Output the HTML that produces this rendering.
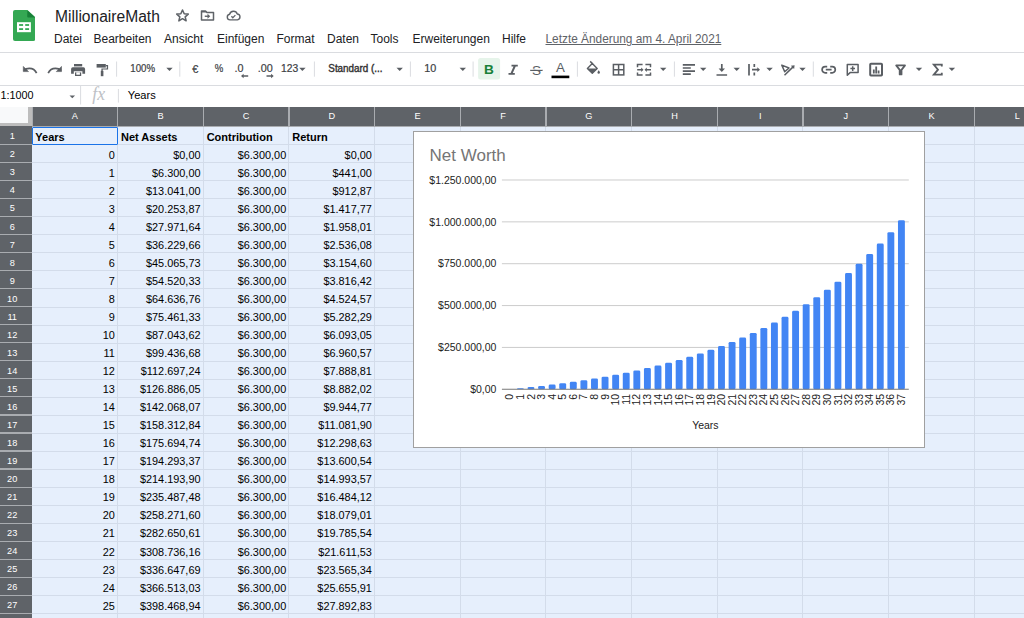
<!DOCTYPE html>
<html lang="de"><head><meta charset="utf-8"><title>MillionaireMath</title>
<style>
html,body{margin:0;padding:0}
body{width:1024px;height:618px;overflow:hidden;background:#fff;position:relative;font-family:"Liberation Sans",sans-serif;color:#202124}
.abs{position:absolute}
#title{left:55px;top:7.7px;font-size:15.6px;line-height:18px;color:#202124;white-space:nowrap}
.menu{top:32.3px;font-size:12px;line-height:14px;color:#202124;white-space:nowrap}
.hr{left:0;width:1024px;height:1px;background:#dadce0}
.tb{font-size:10.6px;color:#444;white-space:nowrap;line-height:12px}
.sep{width:1px;background:#dadce0}
#grid{left:0;top:106.5px;width:1024px;height:512px;background:#e6effc;overflow:hidden}
.ch{top:0;height:19.8px;color:#fff;font-size:9.2px;line-height:19.6px;text-align:center}
.rh{left:-4px;width:32.4px;color:#fff;font-size:9.2px;text-align:center}
.vl{top:0;width:1px;background:#d3dcea;height:512px}
.hl{left:0;height:1px;background:#d3dcea;width:1024px}
.c{font-size:10.9px;line-height:15px;white-space:nowrap;color:#000;height:15px}
.r{text-align:right}
.b{font-weight:bold;font-size:11px}
.ic{fill:none;stroke:#444;stroke-width:1.6}
</style></head><body>
<svg class="abs" style="left:12.9px;top:9.8px" width="22.4" height="30.9" viewBox="0 0 22.4 30.9">
<path d="M2 0H14.4L22.4 7.4V28.9a2 2 0 0 1-2 2H2a2 2 0 0 1-2-2V2a2 2 0 0 1 2-2z" fill="#34a853"/>
<path d="M14.4 0.3L22.2 7.4H15.2a1 1 0 0 1-1-1z" fill="#188038"/>
<rect x="4" y="12.2" width="13.9" height="10" fill="#fff"/>
<rect x="6.1" y="14.1" width="4" height="1.8" fill="#34a853"/><rect x="12.2" y="14.1" width="3.9" height="1.8" fill="#34a853"/>
<rect x="6.1" y="18.2" width="4" height="1.8" fill="#34a853"/><rect x="12.2" y="18.2" width="3.9" height="1.8" fill="#34a853"/>
</svg>
<div id="title" class="abs">MillionaireMath</div>
<!-- star -->
<svg class="abs" style="left:175px;top:8.1px" width="15" height="15" viewBox="0 0 24 24"><path d="M12 3.2l2.700 6 6.500.6-4.900 4.300 1.500 6.400L12 17.100l-5.800 3.400 1.500-6.400-4.900-4.300 6.500-.6z" fill="none" stroke="#5f6368" stroke-width="2.500" stroke-linejoin="round"/></svg>
<!-- folder move -->
<svg class="abs" style="left:200px;top:8.7px" width="15" height="13" viewBox="0 0 30 26"><path d="M3 4h8l3 3h13v15H3z" fill="none" stroke="#5f6368" stroke-width="3" stroke-linejoin="round"/><path d="M3 4h8l3 3H3z" fill="#5f6368"/><path d="M9.500 14.500h8" fill="none" stroke="#5f6368" stroke-width="2.800"/><path d="M15 9.500l5.500 5-5.500 5z" fill="#5f6368"/></svg>
<!-- cloud -->
<svg class="abs" style="left:226.200px;top:9.800px" width="15" height="11.250" viewBox="0 0 32 24"><path d="M8.500 21a6 6 0 0 1-.8-11.900A8.500 8.500 0 0 1 24 8.500 6.300 6.300 0 0 1 24.500 21z" fill="none" stroke="#5f6368" stroke-width="3" stroke-linejoin="round"/><path d="M11.500 13.500l3 3 5.500-5.500" fill="none" stroke="#5f6368" stroke-width="2.800"/></svg>

<div class="abs menu" style="left:54px">Datei</div>
<div class="abs menu" style="left:93.500px">Bearbeiten</div>
<div class="abs menu" style="left:164px">Ansicht</div>
<div class="abs menu" style="left:217px">Einfügen</div>
<div class="abs menu" style="left:276.500px">Format</div>
<div class="abs menu" style="left:327px">Daten</div>
<div class="abs menu" style="left:370.500px">Tools</div>
<div class="abs menu" style="left:412.500px">Erweiterungen</div>
<div class="abs menu" style="left:502px">Hilfe</div>
<div class="abs menu" style="left:545.500px;color:#5f6368;text-decoration:underline;font-size:11.850px">Letzte Änderung am 4. April 2021</div>
<div class="abs hr" style="top:52px"></div>
<div class="abs hr" style="top:85px"></div>
<!-- toolbar -->
<svg class="abs" style="left:0;top:53px" width="1024" height="32" viewBox="0 53 1024 32" font-family="Liberation Sans, sans-serif">
<g fill="none" stroke="#5a5e63" stroke-width="1.7" stroke-linejoin="round">
<!-- undo -->
<path d="M36.600 73.200c-1.500-3.400-4.300-4.800-7.300-4.800-2.300 0-4.200.8-5.600 2.200"/>
<path d="M23.300 66.400v5.200h5.200z" fill="#5a5e63" stroke-width="0.600"/>
<!-- redo -->
<path d="M48.200 73.200c1.500-3.400 4.300-4.800 7.300-4.800 2.300 0 4.200.8 5.600 2.200"/>
<path d="M61.500 66.400v5.200h-5.200z" fill="#5a5e63" stroke-width="0.600"/>
</g>
<!-- print -->
<g fill="#5a5e63">
<rect x="74" y="64" width="8.200" height="2.400"/>
<path d="M72.800 67.300h10.600a1.700 1.700 0 0 1 1.700 1.700v4.700h-2.700v-2.400h-8.600v2.400h-2.700v-4.700a1.700 1.700 0 0 1 1.700-1.700z"/>
<rect x="75" y="72.400" width="6.200" height="3.600"/><rect x="76.300" y="72.400" width="3.600" height="2.300" fill="#fff"/>
<!-- paint format -->
<path d="M96.600 64h9.200v3.600h-9.200z"/>
<path d="M105.800 65h2.300v4.600h-5.400v2h-1.300v-3.200h5.400v-2.200h-1z"/>
<rect x="100.800" y="70.800" width="2.600" height="5.400"/>
</g>
<g stroke="#dadce0" stroke-width="1">
<line x1="116.600" x2="116.600" y1="61.500" y2="76.700"/><line x1="179.800" x2="179.800" y1="61.500" y2="76.700"/>
<line x1="314.400" x2="314.400" y1="61.500" y2="76.700"/><line x1="410.400" x2="410.400" y1="61.500" y2="76.700"/>
<line x1="473.100" x2="473.100" y1="61.500" y2="76.700"/><line x1="577.400" x2="577.400" y1="61.500" y2="76.700"/>
<line x1="674.400" x2="674.400" y1="61.500" y2="76.700"/><line x1="813.300" x2="813.300" y1="61.500" y2="76.700"/>
</g>
<g fill="#3c4043" font-size="10.800" stroke="#3c4043" stroke-width="0.2">
<text x="130.300" y="72.300" font-size="10.2" textLength="24.8" lengthAdjust="spacingAndGlyphs" stroke="#3c4043" stroke-width="0.2">100%</text>
<text x="192.300" y="72.500" font-size="11">€</text>
<text x="214.700" y="72.400" font-size="10.6" textLength="8.500" lengthAdjust="spacingAndGlyphs">%</text>
<text x="234.600" y="72.300">.0</text>
<text x="257.800" y="72.300">.00</text>
<text x="281" y="72.300" font-size="10.3">123</text>
<text x="328.300" y="72.300" fill="#333" stroke="#333" stroke-width="0.4" font-size="10.500" textLength="54.3" lengthAdjust="spacingAndGlyphs">Standard (...</text>
<text x="424.300" y="72.300">10</text>
</g>
<g fill="#5a5e63">
<path d="M166.300 67.800h6.400l-3.200 3.200z"/>
<path d="M299.200 67.800h6.400l-3.200 3.200z"/>
<path d="M396.500 67.800h6.400l-3.200 3.200z"/>
<path d="M459.600 67.800h6.400l-3.200 3.200z"/>
<path d="M660 67.800h6.400l-3.200 3.200z"/>
<path d="M700 67.800h6.400l-3.200 3.200z"/>
<path d="M733.500 67.800h6.400l-3.200 3.200z"/>
<path d="M766.400 67.800h6.400l-3.200 3.200z"/>
<path d="M799.300 67.800h6.400l-3.200 3.200z"/>
<path d="M915.800 67.800h6.400l-3.200 3.200z"/>
<path d="M948.700 67.800h6.400l-3.200 3.200z"/>
<!-- small arrows below .0 and .00 -->
<path d="M241 76l2.600-2.200v1.500h4.600v1.400h-4.600v1.500z"/>
<path d="M273.700 76l-2.600-2.200v1.500h-4.600v1.400h4.600v1.500z"/>
</g>
<!-- bold active -->
<rect x="478.100" y="58.100" width="22" height="21.400" rx="2.500" fill="#e6f4ea"/>
<text x="484.100" y="74.200" font-size="13.6" font-weight="bold" fill="#188038">B</text>
<!-- italic -->
<path d="M511.500 64.800h6.300v1.700h-2.100l-2.900 6.600h2v1.700h-6.300v-1.700h2.100l2.900-6.600h-2z" fill="#5a5e63"/>
<!-- strikethrough -->
<text x="531.900" y="75" font-size="13.6" fill="#5a5e63">S</text>
<rect x="530.200" y="69.600" width="12.400" height="1.400" fill="#5a5e63"/>
<rect x="530.200" y="68.700" width="12.400" height="0.900" fill="#fff"/>
<!-- text color -->
<text x="555.900" y="72.400" font-size="13.300" fill="#5a5e63">A</text>
<rect x="551.500" y="75.600" width="17.800" height="2.600" fill="#000"/>
<!-- fill color -->
<g fill="#5a5e63">
<path d="M592.300 63.500l4.900 4.900-4.900 4.900-4.900-4.900z" fill="none" stroke="#5a5e63" stroke-width="1.400" stroke-linejoin="round"/>
<path d="M587.400 68.400h9.800l-4.900 4.900z"/>
<path d="M592.800 64l-2.600-2.600" stroke="#5a5e63" stroke-width="1.500"/>
<path d="M598.700 70.300s-1.200 1.500-1.200 2.300a1.200 1.200 0 0 0 2.400 0c0-.8-1.200-2.300-1.200-2.300z"/>
</g>
<!-- borders -->
<g fill="none" stroke="#5a5e63" stroke-width="1.500">
<rect x="613.400" y="64.500" width="10.400" height="10.400"/><path d="M618.600 64.500v10.400M613.400 69.700h10.400"/>
</g>
<!-- merge -->
<g fill="none" stroke="#5a5e63" stroke-width="1.500">
<path d="M642.600 64.600h-5.100v2.600M645.400 64.600h5.100v2.600M642.600 75h-5.100v-2.600M645.400 75h5.100v-2.600"/>
<path d="M637.200 69.800h5M651 69.800h-5"/>
</g>
<path d="M641.200 67.600l2.300 2.200-2.300 2.200zM646.800 67.600l-2.300 2.200 2.300 2.200z" fill="#5a5e63"/>
<!-- align left -->
<g stroke="#5a5e63" stroke-width="1.700">
<path d="M682.800 64.900h12.200M682.800 68h8M682.800 71.100h12.200M682.800 74.200h8"/>
</g>
<!-- valign bottom -->
<g stroke="#5a5e63" stroke-width="1.700" fill="none">
<path d="M716.500 75h10.600M721.800 64v7"/>
</g>
<path d="M718.600 68.600h6.400l-3.200 3.400z" fill="#5a5e63"/>
<!-- wrap overflow -->
<g stroke="#5a5e63" stroke-width="1.700" fill="none">
<path d="M749 64v11.400M754.300 64v3M754.300 72.400v3M752 69.700h6"/>
</g>
<path d="M757.300 67.300l2.700 2.400-2.700 2.400z" fill="#5a5e63"/>
<!-- rotate -->
<g stroke="#5a5e63" stroke-width="1.500" fill="none" stroke-linejoin="round">
<path d="M781.800 65.100l7.200 2.900-4.300 3.800z"/>
<path d="M784.500 75.300l8.600-8.400"/>
</g>
<path d="M794.600 65.300l-3.800.5 3.300 3.300z" fill="#5a5e63"/>
<!-- link -->
<g stroke="#5a5e63" stroke-width="1.700" fill="none">
<path d="M827.200 66.600h-2a3.100 3.100 0 0 0 0 6.200h2M830.200 66.600h2a3.100 3.100 0 0 1 0 6.200h-2M825.800 69.700h5.800"/>
</g>
<!-- comment -->
<g stroke="#5a5e63" stroke-width="1.500" fill="none" stroke-linejoin="round">
<path d="M847.300 64.600h10.800v8h-8l-2.800 2.600z"/><path d="M852.700 66.300v4.600M850.400 68.600h4.600"/>
</g>
<!-- chart -->
<rect x="870.200" y="63.800" width="11.800" height="11.800" rx="0.800" fill="none" stroke="#5a5e63" stroke-width="2"/>
<path d="M872.900 69.400h1.800v4.200h-1.800zM875.300 66.600h1.800v7h-1.800zM877.700 70.600h1.800v3h-1.800z" fill="#5a5e63"/>
<!-- filter -->
<path d="M896.200 65.400h8.800l-3.500 4.500v4.500h-1.800v-4.500z" fill="none" stroke="#5a5e63" stroke-width="1.800" stroke-linejoin="round"/>
<!-- sigma -->
<path d="M941.800 66.600v-1.900h-8l4.200 5-4.200 5h8v-1.900" fill="none" stroke="#5a5e63" stroke-width="1.800"/>
</svg>
<!-- formula bar -->
<div class="abs" style="left:0.500px;top:88.600px;font-size:10.800px;line-height:12px;color:#000">1:1000</div>
<svg class="abs" style="left:60px;top:86px" width="70" height="20" viewBox="60 86 70 20">
<path d="M69.500 95.400h5.600l-2.800 2.900z" fill="#5f6368"/>
<line x1="80.600" x2="80.600" y1="86" y2="104.500" stroke="#dadce0"/>
<line x1="118.400" x2="118.400" y1="89" y2="102.600" stroke="#dadce0"/>
<text x="92.200" y="100.300" font-family="Liberation Serif, serif" font-style="italic" font-size="17.800" fill="#bdc1c6">fx</text>
</svg>
<div class="abs" style="left:127.800px;top:88.600px;font-size:11.100px;line-height:12px;color:#000">Years</div>
<div id="grid" class="abs">
<div class="abs vl" style="left:117.12px"></div><div class="abs vl" style="left:202.79px"></div><div class="abs vl" style="left:288.46px"></div><div class="abs vl" style="left:374.13px"></div><div class="abs vl" style="left:459.8px"></div><div class="abs vl" style="left:545.47px"></div><div class="abs vl" style="left:631.14px"></div><div class="abs vl" style="left:716.81px"></div><div class="abs vl" style="left:802.48px"></div><div class="abs vl" style="left:888.15px"></div><div class="abs vl" style="left:973.82px"></div><div class="abs hl" style="top:37.64px"></div><div class="abs hl" style="top:55.68px"></div><div class="abs hl" style="top:73.72px"></div><div class="abs hl" style="top:91.76px"></div><div class="abs hl" style="top:109.8px"></div><div class="abs hl" style="top:127.84px"></div><div class="abs hl" style="top:145.88px"></div><div class="abs hl" style="top:163.92px"></div><div class="abs hl" style="top:181.96px"></div><div class="abs hl" style="top:200px"></div><div class="abs hl" style="top:218.04px"></div><div class="abs hl" style="top:236.08px"></div><div class="abs hl" style="top:254.12px"></div><div class="abs hl" style="top:272.16px"></div><div class="abs hl" style="top:290.2px"></div><div class="abs hl" style="top:308.24px"></div><div class="abs hl" style="top:326.28px"></div><div class="abs hl" style="top:344.32px"></div><div class="abs hl" style="top:362.36px"></div><div class="abs hl" style="top:380.4px"></div><div class="abs hl" style="top:398.44px"></div><div class="abs hl" style="top:416.48px"></div><div class="abs hl" style="top:434.52px"></div><div class="abs hl" style="top:452.56px"></div><div class="abs hl" style="top:470.6px"></div><div class="abs hl" style="top:488.64px"></div><div class="abs hl" style="top:506.68px"></div><div class="abs hl" style="top:524.72px"></div>
<div class="abs" style="left:0;top:0;width:1024px;height:20.5px;background:#a9acb0"></div><div class="abs" style="left:0;top:0;width:1024px;height:19.4px;background:#5f6368"></div><div class="abs ch" style="left:32px;width:85.67px">A</div><div class="abs ch" style="left:117.67px;width:85.67px">B</div><div class="abs ch" style="left:203.34px;width:85.67px">C</div><div class="abs ch" style="left:289.01px;width:85.67px">D</div><div class="abs ch" style="left:374.68px;width:85.67px">E</div><div class="abs ch" style="left:460.35px;width:85.67px">F</div><div class="abs ch" style="left:546.02px;width:85.67px">G</div><div class="abs ch" style="left:631.69px;width:85.67px">H</div><div class="abs ch" style="left:717.36px;width:85.67px">I</div><div class="abs ch" style="left:803.03px;width:85.67px">J</div><div class="abs ch" style="left:888.7px;width:85.67px">K</div><div class="abs ch" style="left:974.37px;width:85.67px">L</div><div class="abs" style="left:31.45px;top:0;width:1.2px;height:19.8px;background:#a9acb0"></div><div class="abs" style="left:117.12px;top:0;width:1.2px;height:19.8px;background:#a9acb0"></div><div class="abs" style="left:202.79px;top:0;width:1.2px;height:19.8px;background:#a9acb0"></div><div class="abs" style="left:288.46px;top:0;width:1.2px;height:19.8px;background:#a9acb0"></div><div class="abs" style="left:374.13px;top:0;width:1.2px;height:19.8px;background:#a9acb0"></div><div class="abs" style="left:459.8px;top:0;width:1.2px;height:19.8px;background:#a9acb0"></div><div class="abs" style="left:545.47px;top:0;width:1.2px;height:19.8px;background:#a9acb0"></div><div class="abs" style="left:631.14px;top:0;width:1.2px;height:19.8px;background:#a9acb0"></div><div class="abs" style="left:716.81px;top:0;width:1.2px;height:19.8px;background:#a9acb0"></div><div class="abs" style="left:802.48px;top:0;width:1.2px;height:19.8px;background:#a9acb0"></div><div class="abs" style="left:888.15px;top:0;width:1.2px;height:19.8px;background:#a9acb0"></div><div class="abs" style="left:973.82px;top:0;width:1.2px;height:19.8px;background:#a9acb0"></div><div class="abs" style="left:0;top:0;width:32px;height:19.8px;background:#bdbdbd"></div><div class="abs" style="left:0;top:0;width:28px;height:16.2px;background:#f8f9fa"></div><div class="abs" style="left:0;top:19.8px;width:32px;height:500px;background:#5f6368"></div><div class="abs rh" style="top:19.8px;height:18.04px;line-height:20.04px">1</div><div class="abs" style="left:0;top:37.24px;width:32px;height:1.2px;background:#a9acb0"></div><div class="abs rh" style="top:37.84px;height:18.04px;line-height:20.04px">2</div><div class="abs" style="left:0;top:55.28px;width:32px;height:1.2px;background:#a9acb0"></div><div class="abs rh" style="top:55.88px;height:18.04px;line-height:20.04px">3</div><div class="abs" style="left:0;top:73.32px;width:32px;height:1.2px;background:#a9acb0"></div><div class="abs rh" style="top:73.92px;height:18.04px;line-height:20.04px">4</div><div class="abs" style="left:0;top:91.36px;width:32px;height:1.2px;background:#a9acb0"></div><div class="abs rh" style="top:91.96px;height:18.04px;line-height:20.04px">5</div><div class="abs" style="left:0;top:109.4px;width:32px;height:1.2px;background:#a9acb0"></div><div class="abs rh" style="top:110px;height:18.04px;line-height:20.04px">6</div><div class="abs" style="left:0;top:127.44px;width:32px;height:1.2px;background:#a9acb0"></div><div class="abs rh" style="top:128.04px;height:18.04px;line-height:20.04px">7</div><div class="abs" style="left:0;top:145.48px;width:32px;height:1.2px;background:#a9acb0"></div><div class="abs rh" style="top:146.08px;height:18.04px;line-height:20.04px">8</div><div class="abs" style="left:0;top:163.52px;width:32px;height:1.2px;background:#a9acb0"></div><div class="abs rh" style="top:164.12px;height:18.04px;line-height:20.04px">9</div><div class="abs" style="left:0;top:181.56px;width:32px;height:1.2px;background:#a9acb0"></div><div class="abs rh" style="top:182.16px;height:18.04px;line-height:20.04px">10</div><div class="abs" style="left:0;top:199.6px;width:32px;height:1.2px;background:#a9acb0"></div><div class="abs rh" style="top:200.2px;height:18.04px;line-height:20.04px">11</div><div class="abs" style="left:0;top:217.64px;width:32px;height:1.2px;background:#a9acb0"></div><div class="abs rh" style="top:218.24px;height:18.04px;line-height:20.04px">12</div><div class="abs" style="left:0;top:235.68px;width:32px;height:1.2px;background:#a9acb0"></div><div class="abs rh" style="top:236.28px;height:18.04px;line-height:20.04px">13</div><div class="abs" style="left:0;top:253.72px;width:32px;height:1.2px;background:#a9acb0"></div><div class="abs rh" style="top:254.32px;height:18.04px;line-height:20.04px">14</div><div class="abs" style="left:0;top:271.76px;width:32px;height:1.2px;background:#a9acb0"></div><div class="abs rh" style="top:272.36px;height:18.04px;line-height:20.04px">15</div><div class="abs" style="left:0;top:289.8px;width:32px;height:1.2px;background:#a9acb0"></div><div class="abs rh" style="top:290.4px;height:18.04px;line-height:20.04px">16</div><div class="abs" style="left:0;top:307.84px;width:32px;height:1.2px;background:#a9acb0"></div><div class="abs rh" style="top:308.44px;height:18.04px;line-height:20.04px">17</div><div class="abs" style="left:0;top:325.88px;width:32px;height:1.2px;background:#a9acb0"></div><div class="abs rh" style="top:326.48px;height:18.04px;line-height:20.04px">18</div><div class="abs" style="left:0;top:343.92px;width:32px;height:1.2px;background:#a9acb0"></div><div class="abs rh" style="top:344.52px;height:18.04px;line-height:20.04px">19</div><div class="abs" style="left:0;top:361.96px;width:32px;height:1.2px;background:#a9acb0"></div><div class="abs rh" style="top:362.56px;height:18.04px;line-height:20.04px">20</div><div class="abs" style="left:0;top:380px;width:32px;height:1.2px;background:#a9acb0"></div><div class="abs rh" style="top:380.6px;height:18.04px;line-height:20.04px">21</div><div class="abs" style="left:0;top:398.04px;width:32px;height:1.2px;background:#a9acb0"></div><div class="abs rh" style="top:398.64px;height:18.04px;line-height:20.04px">22</div><div class="abs" style="left:0;top:416.08px;width:32px;height:1.2px;background:#a9acb0"></div><div class="abs rh" style="top:416.68px;height:18.04px;line-height:20.04px">23</div><div class="abs" style="left:0;top:434.12px;width:32px;height:1.2px;background:#a9acb0"></div><div class="abs rh" style="top:434.72px;height:18.04px;line-height:20.04px">24</div><div class="abs" style="left:0;top:452.16px;width:32px;height:1.2px;background:#a9acb0"></div><div class="abs rh" style="top:452.76px;height:18.04px;line-height:20.04px">25</div><div class="abs" style="left:0;top:470.2px;width:32px;height:1.2px;background:#a9acb0"></div><div class="abs rh" style="top:470.8px;height:18.04px;line-height:20.04px">26</div><div class="abs" style="left:0;top:488.24px;width:32px;height:1.2px;background:#a9acb0"></div><div class="abs rh" style="top:488.84px;height:18.04px;line-height:20.04px">27</div><div class="abs" style="left:0;top:506.28px;width:32px;height:1.2px;background:#a9acb0"></div><div class="abs rh" style="top:506.88px;height:18.04px;line-height:20.04px">28</div><div class="abs" style="left:0;top:524.32px;width:32px;height:1.2px;background:#a9acb0"></div>
<div class="abs c b" style="left:35.3px;top:23.1px">Years</div><div class="abs c b" style="left:120.97px;top:23.1px">Net Assets</div><div class="abs c b" style="left:206.64px;top:23.1px">Contribution</div><div class="abs c b" style="left:292.31px;top:23.1px">Return</div><div class="abs c r" style="left:32px;width:82.87px;top:41.14px">0</div><div class="abs c r" style="left:117.67px;width:82.87px;top:41.14px">$0,00</div><div class="abs c r" style="left:203.34px;width:82.87px;top:41.14px">$6.300,00</div><div class="abs c r" style="left:289.01px;width:82.87px;top:41.14px">$0,00</div>
<div class="abs c r" style="left:32px;width:82.87px;top:59.18px">1</div><div class="abs c r" style="left:117.67px;width:82.87px;top:59.18px">$6.300,00</div><div class="abs c r" style="left:203.34px;width:82.87px;top:59.18px">$6.300,00</div><div class="abs c r" style="left:289.01px;width:82.87px;top:59.18px">$441,00</div>
<div class="abs c r" style="left:32px;width:82.87px;top:77.22px">2</div><div class="abs c r" style="left:117.67px;width:82.87px;top:77.22px">$13.041,00</div><div class="abs c r" style="left:203.34px;width:82.87px;top:77.22px">$6.300,00</div><div class="abs c r" style="left:289.01px;width:82.87px;top:77.22px">$912,87</div>
<div class="abs c r" style="left:32px;width:82.87px;top:95.26px">3</div><div class="abs c r" style="left:117.67px;width:82.87px;top:95.26px">$20.253,87</div><div class="abs c r" style="left:203.34px;width:82.87px;top:95.26px">$6.300,00</div><div class="abs c r" style="left:289.01px;width:82.87px;top:95.26px">$1.417,77</div>
<div class="abs c r" style="left:32px;width:82.87px;top:113.3px">4</div><div class="abs c r" style="left:117.67px;width:82.87px;top:113.3px">$27.971,64</div><div class="abs c r" style="left:203.34px;width:82.87px;top:113.3px">$6.300,00</div><div class="abs c r" style="left:289.01px;width:82.87px;top:113.3px">$1.958,01</div>
<div class="abs c r" style="left:32px;width:82.87px;top:131.34px">5</div><div class="abs c r" style="left:117.67px;width:82.87px;top:131.34px">$36.229,66</div><div class="abs c r" style="left:203.34px;width:82.87px;top:131.34px">$6.300,00</div><div class="abs c r" style="left:289.01px;width:82.87px;top:131.34px">$2.536,08</div>
<div class="abs c r" style="left:32px;width:82.87px;top:149.38px">6</div><div class="abs c r" style="left:117.67px;width:82.87px;top:149.38px">$45.065,73</div><div class="abs c r" style="left:203.34px;width:82.87px;top:149.38px">$6.300,00</div><div class="abs c r" style="left:289.01px;width:82.87px;top:149.38px">$3.154,60</div>
<div class="abs c r" style="left:32px;width:82.87px;top:167.42px">7</div><div class="abs c r" style="left:117.67px;width:82.87px;top:167.42px">$54.520,33</div><div class="abs c r" style="left:203.34px;width:82.87px;top:167.42px">$6.300,00</div><div class="abs c r" style="left:289.01px;width:82.87px;top:167.42px">$3.816,42</div>
<div class="abs c r" style="left:32px;width:82.87px;top:185.46px">8</div><div class="abs c r" style="left:117.67px;width:82.87px;top:185.46px">$64.636,76</div><div class="abs c r" style="left:203.34px;width:82.87px;top:185.46px">$6.300,00</div><div class="abs c r" style="left:289.01px;width:82.87px;top:185.46px">$4.524,57</div>
<div class="abs c r" style="left:32px;width:82.87px;top:203.5px">9</div><div class="abs c r" style="left:117.67px;width:82.87px;top:203.5px">$75.461,33</div><div class="abs c r" style="left:203.34px;width:82.87px;top:203.5px">$6.300,00</div><div class="abs c r" style="left:289.01px;width:82.87px;top:203.5px">$5.282,29</div>
<div class="abs c r" style="left:32px;width:82.87px;top:221.54px">10</div><div class="abs c r" style="left:117.67px;width:82.87px;top:221.54px">$87.043,62</div><div class="abs c r" style="left:203.34px;width:82.87px;top:221.54px">$6.300,00</div><div class="abs c r" style="left:289.01px;width:82.87px;top:221.54px">$6.093,05</div>
<div class="abs c r" style="left:32px;width:82.87px;top:239.58px">11</div><div class="abs c r" style="left:117.67px;width:82.87px;top:239.58px">$99.436,68</div><div class="abs c r" style="left:203.34px;width:82.87px;top:239.58px">$6.300,00</div><div class="abs c r" style="left:289.01px;width:82.87px;top:239.58px">$6.960,57</div>
<div class="abs c r" style="left:32px;width:82.87px;top:257.62px">12</div><div class="abs c r" style="left:117.67px;width:82.87px;top:257.62px">$112.697,24</div><div class="abs c r" style="left:203.34px;width:82.87px;top:257.62px">$6.300,00</div><div class="abs c r" style="left:289.01px;width:82.87px;top:257.62px">$7.888,81</div>
<div class="abs c r" style="left:32px;width:82.87px;top:275.66px">13</div><div class="abs c r" style="left:117.67px;width:82.87px;top:275.66px">$126.886,05</div><div class="abs c r" style="left:203.34px;width:82.87px;top:275.66px">$6.300,00</div><div class="abs c r" style="left:289.01px;width:82.87px;top:275.66px">$8.882,02</div>
<div class="abs c r" style="left:32px;width:82.87px;top:293.7px">14</div><div class="abs c r" style="left:117.67px;width:82.87px;top:293.7px">$142.068,07</div><div class="abs c r" style="left:203.34px;width:82.87px;top:293.7px">$6.300,00</div><div class="abs c r" style="left:289.01px;width:82.87px;top:293.7px">$9.944,77</div>
<div class="abs c r" style="left:32px;width:82.87px;top:311.74px">15</div><div class="abs c r" style="left:117.67px;width:82.87px;top:311.74px">$158.312,84</div><div class="abs c r" style="left:203.34px;width:82.87px;top:311.74px">$6.300,00</div><div class="abs c r" style="left:289.01px;width:82.87px;top:311.74px">$11.081,90</div>
<div class="abs c r" style="left:32px;width:82.87px;top:329.78px">16</div><div class="abs c r" style="left:117.67px;width:82.87px;top:329.78px">$175.694,74</div><div class="abs c r" style="left:203.34px;width:82.87px;top:329.78px">$6.300,00</div><div class="abs c r" style="left:289.01px;width:82.87px;top:329.78px">$12.298,63</div>
<div class="abs c r" style="left:32px;width:82.87px;top:347.82px">17</div><div class="abs c r" style="left:117.67px;width:82.87px;top:347.82px">$194.293,37</div><div class="abs c r" style="left:203.34px;width:82.87px;top:347.82px">$6.300,00</div><div class="abs c r" style="left:289.01px;width:82.87px;top:347.82px">$13.600,54</div>
<div class="abs c r" style="left:32px;width:82.87px;top:365.86px">18</div><div class="abs c r" style="left:117.67px;width:82.87px;top:365.86px">$214.193,90</div><div class="abs c r" style="left:203.34px;width:82.87px;top:365.86px">$6.300,00</div><div class="abs c r" style="left:289.01px;width:82.87px;top:365.86px">$14.993,57</div>
<div class="abs c r" style="left:32px;width:82.87px;top:383.9px">19</div><div class="abs c r" style="left:117.67px;width:82.87px;top:383.9px">$235.487,48</div><div class="abs c r" style="left:203.34px;width:82.87px;top:383.9px">$6.300,00</div><div class="abs c r" style="left:289.01px;width:82.87px;top:383.9px">$16.484,12</div>
<div class="abs c r" style="left:32px;width:82.87px;top:401.94px">20</div><div class="abs c r" style="left:117.67px;width:82.87px;top:401.94px">$258.271,60</div><div class="abs c r" style="left:203.34px;width:82.87px;top:401.94px">$6.300,00</div><div class="abs c r" style="left:289.01px;width:82.87px;top:401.94px">$18.079,01</div>
<div class="abs c r" style="left:32px;width:82.87px;top:419.98px">21</div><div class="abs c r" style="left:117.67px;width:82.87px;top:419.98px">$282.650,61</div><div class="abs c r" style="left:203.34px;width:82.87px;top:419.98px">$6.300,00</div><div class="abs c r" style="left:289.01px;width:82.87px;top:419.98px">$19.785,54</div>
<div class="abs c r" style="left:32px;width:82.87px;top:438.02px">22</div><div class="abs c r" style="left:117.67px;width:82.87px;top:438.02px">$308.736,16</div><div class="abs c r" style="left:203.34px;width:82.87px;top:438.02px">$6.300,00</div><div class="abs c r" style="left:289.01px;width:82.87px;top:438.02px">$21.611,53</div>
<div class="abs c r" style="left:32px;width:82.87px;top:456.06px">23</div><div class="abs c r" style="left:117.67px;width:82.87px;top:456.06px">$336.647,69</div><div class="abs c r" style="left:203.34px;width:82.87px;top:456.06px">$6.300,00</div><div class="abs c r" style="left:289.01px;width:82.87px;top:456.06px">$23.565,34</div>
<div class="abs c r" style="left:32px;width:82.87px;top:474.1px">24</div><div class="abs c r" style="left:117.67px;width:82.87px;top:474.1px">$366.513,03</div><div class="abs c r" style="left:203.34px;width:82.87px;top:474.1px">$6.300,00</div><div class="abs c r" style="left:289.01px;width:82.87px;top:474.1px">$25.655,91</div>
<div class="abs c r" style="left:32px;width:82.87px;top:492.14px">25</div><div class="abs c r" style="left:117.67px;width:82.87px;top:492.14px">$398.468,94</div><div class="abs c r" style="left:203.34px;width:82.87px;top:492.14px">$6.300,00</div><div class="abs c r" style="left:289.01px;width:82.87px;top:492.14px">$27.892,83</div>
<div class="abs c r" style="left:32px;width:82.87px;top:510.18px">26</div><div class="abs c r" style="left:117.67px;width:82.87px;top:510.18px">$432.661,76</div><div class="abs c r" style="left:203.34px;width:82.87px;top:510.18px">$6.300,00</div><div class="abs c r" style="left:289.01px;width:82.87px;top:510.18px">$30.286,32</div>
<div class="abs" style="left:32.1px;top:20.4px;width:83.47px;height:15.84px;border:1.4px solid #1a73e8;border-radius:1px"></div></div>
<div class="abs" style="left:413.4px;top:131.1px;width:509.2px;height:315.1px;background:#fff;border:1px solid #a0a0a0"></div>
<svg class="abs" style="left:413.4px;top:131.1px" width="511.2" height="317.1" viewBox="413.4 131.1 511.2 317.1" font-family="Liberation Sans, sans-serif">
<text x="430" y="160.8" font-size="17" fill="#757575">Net Worth</text>
<line x1="502.3" x2="909.2" y1="180.1" y2="180.1" stroke="#cccccc" stroke-width="1"/><text x="496.8" y="183.8" font-size="10.5" fill="#222" text-anchor="end">$1.250.000,00</text>
<line x1="502.3" x2="909.2" y1="221.96" y2="221.96" stroke="#cccccc" stroke-width="1"/><text x="496.8" y="225.66" font-size="10.5" fill="#222" text-anchor="end">$1.000.000,00</text>
<line x1="502.3" x2="909.2" y1="263.82" y2="263.82" stroke="#cccccc" stroke-width="1"/><text x="496.8" y="267.52" font-size="10.5" fill="#222" text-anchor="end">$750.000,00</text>
<line x1="502.3" x2="909.2" y1="305.68" y2="305.68" stroke="#cccccc" stroke-width="1"/><text x="496.8" y="309.38" font-size="10.5" fill="#222" text-anchor="end">$500.000,00</text>
<line x1="502.3" x2="909.2" y1="347.54" y2="347.54" stroke="#cccccc" stroke-width="1"/><text x="496.8" y="351.24" font-size="10.5" fill="#222" text-anchor="end">$250.000,00</text>
<text x="496.8" y="393.1" font-size="10.5" fill="#222" text-anchor="end">$0,00</text>
<rect x="517.33" y="388.35" width="6.9" height="1.05" rx="1.4" fill="#4285f4"/><rect x="527.92" y="387.22" width="6.9" height="2.18" rx="1.4" fill="#4285f4"/><rect x="538.5" y="386.01" width="6.9" height="3.39" rx="1.4" fill="#4285f4"/><rect x="549.09" y="384.72" width="6.9" height="4.68" rx="1.4" fill="#4285f4"/><rect x="559.67" y="383.33" width="6.9" height="6.07" rx="1.4" fill="#4285f4"/><rect x="570.26" y="381.85" width="6.9" height="7.55" rx="1.4" fill="#4285f4"/><rect x="580.84" y="380.27" width="6.9" height="9.13" rx="1.4" fill="#4285f4"/><rect x="591.43" y="378.58" width="6.9" height="10.82" rx="1.4" fill="#4285f4"/><rect x="602.01" y="376.76" width="6.9" height="12.64" rx="1.4" fill="#4285f4"/><rect x="612.6" y="374.83" width="6.9" height="14.57" rx="1.4" fill="#4285f4"/><rect x="623.18" y="372.75" width="6.9" height="16.65" rx="1.4" fill="#4285f4"/><rect x="633.77" y="370.53" width="6.9" height="18.87" rx="1.4" fill="#4285f4"/><rect x="644.36" y="368.15" width="6.9" height="21.25" rx="1.4" fill="#4285f4"/><rect x="654.94" y="365.61" width="6.9" height="23.79" rx="1.4" fill="#4285f4"/><rect x="665.52" y="362.89" width="6.9" height="26.51" rx="1.4" fill="#4285f4"/><rect x="676.11" y="359.98" width="6.9" height="29.42" rx="1.4" fill="#4285f4"/><rect x="686.69" y="356.87" width="6.9" height="32.53" rx="1.4" fill="#4285f4"/><rect x="697.28" y="353.54" width="6.9" height="35.86" rx="1.4" fill="#4285f4"/><rect x="707.87" y="349.97" width="6.9" height="39.43" rx="1.4" fill="#4285f4"/><rect x="718.45" y="346.16" width="6.9" height="43.24" rx="1.4" fill="#4285f4"/><rect x="729.03" y="342.07" width="6.9" height="47.33" rx="1.4" fill="#4285f4"/><rect x="739.62" y="337.71" width="6.9" height="51.69" rx="1.4" fill="#4285f4"/><rect x="750.2" y="333.03" width="6.9" height="56.37" rx="1.4" fill="#4285f4"/><rect x="760.79" y="328.03" width="6.9" height="61.37" rx="1.4" fill="#4285f4"/><rect x="771.38" y="322.68" width="6.9" height="66.72" rx="1.4" fill="#4285f4"/><rect x="781.96" y="316.96" width="6.9" height="72.44" rx="1.4" fill="#4285f4"/><rect x="792.54" y="310.83" width="6.9" height="78.57" rx="1.4" fill="#4285f4"/><rect x="803.13" y="304.27" width="6.9" height="85.13" rx="1.4" fill="#4285f4"/><rect x="813.71" y="297.26" width="6.9" height="92.14" rx="1.4" fill="#4285f4"/><rect x="824.3" y="289.76" width="6.9" height="99.64" rx="1.4" fill="#4285f4"/><rect x="834.88" y="281.73" width="6.9" height="107.67" rx="1.4" fill="#4285f4"/><rect x="845.47" y="273.13" width="6.9" height="116.27" rx="1.4" fill="#4285f4"/><rect x="856.05" y="263.94" width="6.9" height="125.46" rx="1.4" fill="#4285f4"/><rect x="866.64" y="254.1" width="6.9" height="135.3" rx="1.4" fill="#4285f4"/><rect x="877.22" y="243.58" width="6.9" height="145.82" rx="1.4" fill="#4285f4"/><rect x="887.81" y="232.32" width="6.9" height="157.08" rx="1.4" fill="#4285f4"/><rect x="898.39" y="220.26" width="6.9" height="169.14" rx="1.4" fill="#4285f4"/>
<line x1="502.3" x2="909.2" y1="389.4" y2="389.4" stroke="#777" stroke-width="1.1"/>
<text transform="translate(513.8 394) rotate(-90)" font-size="10.5" fill="#222" text-anchor="end">0</text><text transform="translate(524.38 394) rotate(-90)" font-size="10.5" fill="#222" text-anchor="end">1</text><text transform="translate(534.97 394) rotate(-90)" font-size="10.5" fill="#222" text-anchor="end">2</text><text transform="translate(545.56 394) rotate(-90)" font-size="10.5" fill="#222" text-anchor="end">3</text><text transform="translate(556.14 394) rotate(-90)" font-size="10.5" fill="#222" text-anchor="end">4</text><text transform="translate(566.73 394) rotate(-90)" font-size="10.5" fill="#222" text-anchor="end">5</text><text transform="translate(577.31 394) rotate(-90)" font-size="10.5" fill="#222" text-anchor="end">6</text><text transform="translate(587.89 394) rotate(-90)" font-size="10.5" fill="#222" text-anchor="end">7</text><text transform="translate(598.48 394) rotate(-90)" font-size="10.5" fill="#222" text-anchor="end">8</text><text transform="translate(609.07 394) rotate(-90)" font-size="10.5" fill="#222" text-anchor="end">9</text><text transform="translate(619.65 394) rotate(-90)" font-size="10.5" fill="#222" text-anchor="end">10</text><text transform="translate(630.24 394) rotate(-90)" font-size="10.5" fill="#222" text-anchor="end">11</text><text transform="translate(640.82 394) rotate(-90)" font-size="10.5" fill="#222" text-anchor="end">12</text><text transform="translate(651.41 394) rotate(-90)" font-size="10.5" fill="#222" text-anchor="end">13</text><text transform="translate(661.99 394) rotate(-90)" font-size="10.5" fill="#222" text-anchor="end">14</text><text transform="translate(672.58 394) rotate(-90)" font-size="10.5" fill="#222" text-anchor="end">15</text><text transform="translate(683.16 394) rotate(-90)" font-size="10.5" fill="#222" text-anchor="end">16</text><text transform="translate(693.75 394) rotate(-90)" font-size="10.5" fill="#222" text-anchor="end">17</text><text transform="translate(704.33 394) rotate(-90)" font-size="10.5" fill="#222" text-anchor="end">18</text><text transform="translate(714.92 394) rotate(-90)" font-size="10.5" fill="#222" text-anchor="end">19</text><text transform="translate(725.5 394) rotate(-90)" font-size="10.5" fill="#222" text-anchor="end">20</text><text transform="translate(736.09 394) rotate(-90)" font-size="10.5" fill="#222" text-anchor="end">21</text><text transform="translate(746.67 394) rotate(-90)" font-size="10.5" fill="#222" text-anchor="end">22</text><text transform="translate(757.25 394) rotate(-90)" font-size="10.5" fill="#222" text-anchor="end">23</text><text transform="translate(767.84 394) rotate(-90)" font-size="10.5" fill="#222" text-anchor="end">24</text><text transform="translate(778.43 394) rotate(-90)" font-size="10.5" fill="#222" text-anchor="end">25</text><text transform="translate(789.01 394) rotate(-90)" font-size="10.5" fill="#222" text-anchor="end">26</text><text transform="translate(799.6 394) rotate(-90)" font-size="10.5" fill="#222" text-anchor="end">27</text><text transform="translate(810.18 394) rotate(-90)" font-size="10.5" fill="#222" text-anchor="end">28</text><text transform="translate(820.76 394) rotate(-90)" font-size="10.5" fill="#222" text-anchor="end">29</text><text transform="translate(831.35 394) rotate(-90)" font-size="10.5" fill="#222" text-anchor="end">30</text><text transform="translate(841.94 394) rotate(-90)" font-size="10.5" fill="#222" text-anchor="end">31</text><text transform="translate(852.52 394) rotate(-90)" font-size="10.5" fill="#222" text-anchor="end">32</text><text transform="translate(863.11 394) rotate(-90)" font-size="10.5" fill="#222" text-anchor="end">33</text><text transform="translate(873.69 394) rotate(-90)" font-size="10.5" fill="#222" text-anchor="end">34</text><text transform="translate(884.27 394) rotate(-90)" font-size="10.5" fill="#222" text-anchor="end">35</text><text transform="translate(894.86 394) rotate(-90)" font-size="10.5" fill="#222" text-anchor="end">36</text><text transform="translate(905.45 394) rotate(-90)" font-size="10.5" fill="#222" text-anchor="end">37</text>
<text x="705.8" y="429" font-size="10.5" fill="#222" text-anchor="middle">Years</text>
</svg>
</body></html>
